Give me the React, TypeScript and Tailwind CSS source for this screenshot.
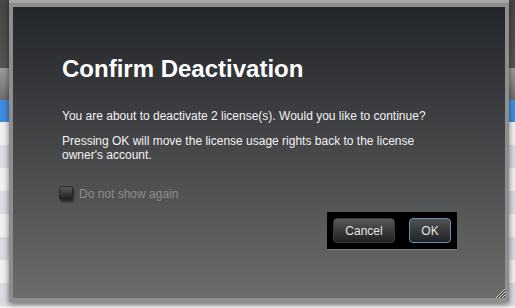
export default function App() {
  const rows = Array.from({ length: 9 });

  return (
    <div className="relative h-[308px] w-[515px] overflow-hidden bg-[#f1f1f3] font-['Liberation_Sans',Arial,sans-serif]">
      {/* app behind the dialog */}
      <div className="flex flex-col">
        <div className="h-[68px] bg-gradient-to-b from-[#474747] to-[#555555]" />
        <div className="h-[32px] bg-gradient-to-b from-[#9c9c9c] to-[#6e6e6e]" />
        <div className="h-[22px] bg-[#3f8fde]" />
        {rows.map((_, i) => (
          <div
            key={i}
            className={`h-[23px] ${i % 2 === 0 ? "bg-[#f2f2f3]" : "bg-[#dcdde3]"}`}
          />
        ))}
      </div>

      {/* dialog */}
      <div className="absolute left-[9px] top-0 h-[302px] w-[500px] border-t-[3px] border-[#a6a6a6] bg-[#8e8e8e] p-[4px] shadow-[0_2px_6px_rgba(0,0,0,0.55)]">
        <div className="relative flex h-full flex-col bg-gradient-to-b from-[#22252a] via-[#47484a] to-[#6c6c6b] pl-[49px] pr-[48px] pt-[48px]">
          <h1 className="text-[24px] font-bold leading-[28px] text-white">
            Confirm Deactivation
          </h1>
          <p className="mt-[26px] w-[390px] text-[12px] leading-[14px] text-[#f2f2f2]">
            You are about to deactivate 2 license(s). Would you like to continue?
          </p>
          <p className="mt-[11px] w-[390px] text-[12px] leading-[14px] text-[#f2f2f2]">
            Pressing OK will move the license usage rights back to the license
            owner's account.
          </p>

          <label className="mt-[24px] flex items-start gap-[6px]">
            <span className="-ml-[3px] h-[14px] w-[14px] rounded-[2px] border border-[#2a2a2a] bg-gradient-to-b from-[#5a5a5a] to-[#1f1f1f] shadow-[1px_2px_2px_rgba(0,0,0,0.5)]" />
            <span className="mt-[1px] text-[12px] leading-[14px] text-[#8d8d8d]">
              Do not show again
            </span>
          </label>

          <div className="mt-[11px] flex justify-end">
            <div className="flex gap-[14px] border-b border-[#7d7d7d] bg-black p-[6px]">
              <button className="h-[25px] w-[62px] rounded-[4px] border border-[#3c3c3c] bg-gradient-to-b from-[#5a5a5a] to-[#202020] text-[12px] text-[#e4e4e4]">
                Cancel
              </button>
              <button className="h-[25px] w-[42px] rounded-[4px] border border-[#6c8fb5] bg-gradient-to-b from-[#525252] to-[#1f2226] text-[12px] text-[#e4e4e4]">
                OK
              </button>
            </div>
          </div>

          {/* resize grip */}
          <svg
            className="absolute bottom-0 right-0"
            width="10"
            height="10"
            viewBox="0 0 10 10"
          >
            <path
              d="M10 1 L1 10 M10 4 L4 10 M10 7 L7 10"
              stroke="#d8d8d8"
              strokeWidth="1"
            />
            <path
              d="M10 2 L2 10 M10 5 L5 10 M10 8 L8 10"
              stroke="#3a3a3a"
              strokeWidth="1"
            />
          </svg>
        </div>
      </div>
    </div>
  );
}
